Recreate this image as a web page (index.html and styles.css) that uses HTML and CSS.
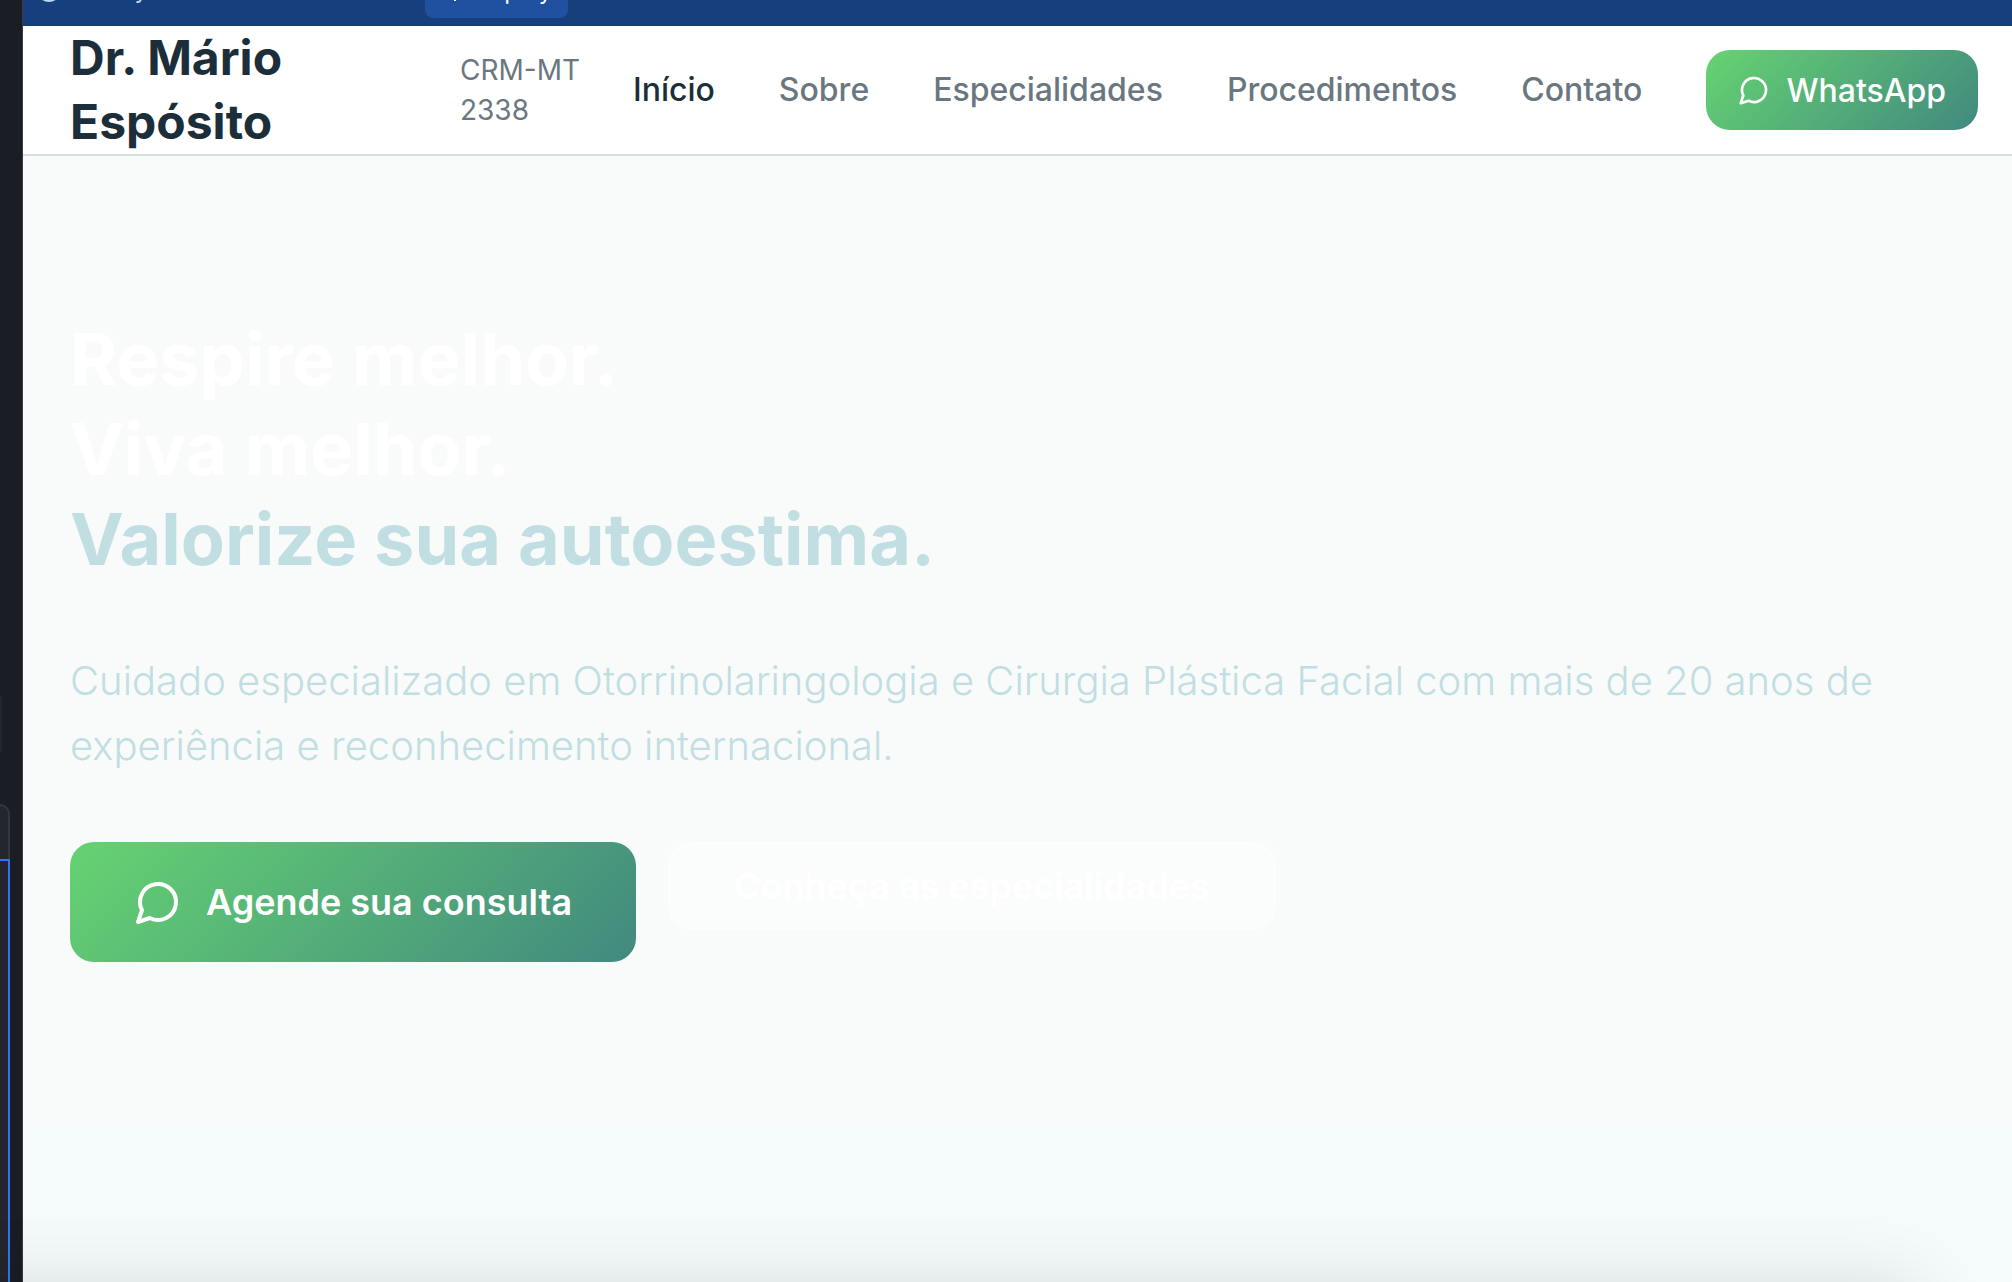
FILE: index.html
```html
<!DOCTYPE html>
<html lang="pt-BR">
<head>
<meta charset="utf-8">
<meta name="viewport" content="width=device-width, initial-scale=1">
<title>Dr. Mário Espósito</title>
<link rel="stylesheet" href="styles.css">
</head>
<body>
<div class="workspace">
  <aside class="chat-edge">
    <div class="chat-card"></div>
    <div class="composer">
      <div class="composer-head"></div>
      <div class="composer-input"></div>
    </div>
  </aside>
  <div class="preview">
    <div class="toolbar">
      <div class="toolbar-note">
        <svg class="toolbar-icon" viewBox="0 0 24 24" aria-hidden="true"><circle cx="12" cy="12" r="11"/></svg>
        <span>Ready</span>
      </div>
      <button class="deploy" type="button">
        <svg class="toolbar-icon" viewBox="0 0 24 24" aria-hidden="true"><path d="M14 3v20"/></svg>
        <span>Deploy</span>
      </button>
    </div>
    <header class="site-header">
      <div class="brand">
        <h2 class="brand-name">Dr. Mário Espósito</h2>
        <span class="brand-id">CRM-MT 2338</span>
      </div>
      <nav class="site-nav">
        <a class="nav-link nav-link-active" href="#inicio">Início</a>
        <a class="nav-link" href="#sobre">Sobre</a>
        <a class="nav-link" href="#especialidades">Especialidades</a>
        <a class="nav-link" href="#procedimentos">Procedimentos</a>
        <a class="nav-link" href="#contato">Contato</a>
        <button class="button button-small" type="button">
          <svg class="icon" viewBox="0 0 24 24" aria-hidden="true"><path d="M7.9 20A9 9 0 1 0 4 16.1L2 22Z"/></svg>
          <span>WhatsApp</span>
        </button>
      </nav>
    </header>
    <main>
      <section class="hero" id="inicio">
        <h1 class="hero-title">Respire melhor.<br>Viva melhor.<br><span class="accent">Valorize sua autoestima.</span></h1>
        <p class="hero-text">Cuidado especializado em Otorrinolaringologia e Cirurgia Plástica Facial com mais de 20 anos de experiência e reconhecimento internacional.</p>
        <div class="hero-actions">
          <button class="button button-large" type="button">
            <svg class="icon icon-large" viewBox="0 0 24 24" aria-hidden="true"><path d="M7.9 20A9 9 0 1 0 4 16.1L2 22Z"/></svg>
            <span>Agende sua consulta</span>
          </button>
          <button class="button-ghost" type="button">Conheça as especialidades</button>
        </div>
      </section>
      <section class="next-section" id="sobre"></section>
    </main>
  </div>
  <div class="panel-shadow"></div>
</div>
</body>
</html>
```
FILE: styles.css
```css
* {
  box-sizing: border-box;
}

body {
  margin: 0;
  font-family: Inter, "Liberation Sans", sans-serif;
}

button {
  border: 0;
  font-family: inherit;
  cursor: pointer;
}

.workspace {
  position: relative;
  display: grid;
  grid-template-columns: 23px minmax(0, 1fr);
  height: 100vh;
  overflow: hidden;
}

/* Right edge of the chat column */
.chat-edge {
  display: flex;
  flex-direction: column;
  background: #1a1d24;
  border-right: 1px solid #3a3c42;
}

.chat-card {
  width: 2px;
  height: 56px;
  margin-top: 696px;
  background: #23262e;
  border-radius: 0 8px 8px 0;
}

.composer {
  display: flex;
  flex: 1;
  flex-direction: column;
  width: 10px;
  margin-top: 52px;
}

.composer-head {
  height: 55px;
  background: #23262e;
  border: 2px solid #33363e;
  border-width: 2px 2px 0 0;
  border-radius: 0 14px 0 0;
}

.composer-input {
  flex: 1;
  background: #23262e;
  border: 2px solid #3574f0;
  border-width: 2px 2px 0 0;
}

.preview {
  display: flex;
  flex-direction: column;
  background: #f9fbfa;
}

/* Toolbar, scrolled mostly out of view */
.toolbar {
  display: flex;
  flex: none;
  align-items: flex-end;
  height: 26px;
  padding: 0 14px 8px;
  background: #183f7d;
  color: #b9d7fb;
  font-size: 24px;
  line-height: 32px;
}

.toolbar-note {
  display: flex;
  gap: 16px;
  align-items: center;
  width: 388px;
  height: 56px;
}

.toolbar-icon {
  width: 24px;
  height: 24px;
  fill: none;
  stroke: currentColor;
  stroke-width: 2;
  overflow: visible;
}

.deploy {
  display: flex;
  gap: 8px;
  align-items: center;
  height: 56px;
  padding: 0 16px;
  background: #2050a0;
  border-radius: 8px;
  color: #fff;
  font-size: 24px;
}

.site-header {
  display: flex;
  flex: none;
  align-items: center;
  justify-content: space-between;
  height: 130px;
  padding: 0 34px 0 47px;
  background: #fff;
  border-bottom: 2px solid #d3dfdf;
}

.brand {
  display: flex;
  gap: 24px;
  align-items: center;
}

.brand-name {
  width: 366px;
  margin: 0;
  padding-right: 120px;
  color: #1c2e3a;
  font-size: 48px;
  font-weight: 700;
  line-height: 64px;
}

.brand-id {
  width: 124px;
  color: #6a7780;
  font-size: 28px;
  line-height: 40px;
}

.site-nav {
  display: flex;
  gap: 64px;
  align-items: center;
}

.nav-link {
  color: #6a7780;
  font-size: 32px;
  font-weight: 500;
  line-height: 48px;
  text-decoration: none;
}

.nav-link-active {
  color: #1c2e3a;
}

.button {
  display: flex;
  align-items: center;
  background: linear-gradient(135deg, #66d372, #41897f);
  border-radius: 24px;
  color: #fff;
  white-space: nowrap;
}

.button-small {
  gap: 16px;
  height: 80px;
  padding: 0 32px;
  font-size: 32px;
  font-weight: 500;
}

.button-large {
  gap: 24px;
  height: 120px;
  padding: 0 64px;
  font-size: 36px;
  font-weight: 600;
}

.icon {
  width: 32px;
  height: 32px;
  fill: none;
  stroke: currentColor;
  stroke-linecap: round;
  stroke-linejoin: round;
  stroke-width: 2;
}

.icon-large {
  width: 48px;
  height: 48px;
}

.hero {
  padding: 158px 47px 160px;
}

.hero-title {
  margin: 0 0 64px;
  color: #fff;
  font-size: 72px;
  font-weight: 700;
  line-height: 90px;
}

.accent {
  color: #c1dee2;
}

.hero-text {
  margin: 0 0 64px;
  color: #c1dee2;
  font-size: 40px;
  font-weight: 300;
  line-height: 65px;
}

.hero-actions {
  display: flex;
  gap: 32px;
  align-items: flex-start;
}

.button-ghost {
  height: 88px;
  padding: 0 64px;
  background: #fbfcfc;
  border: 2px solid #fcfdfd;
  border-radius: 24px;
  color: #fff;
  font-size: 36px;
  font-weight: 600;
}

.next-section {
  height: 400px;
  background: #f5fbfb;
}

/* Shadow cast by the panel below the window */
.panel-shadow {
  position: absolute;
  top: 100%;
  right: 92px;
  left: -100px;
  height: 100px;
  border-radius: 24px;
  box-shadow: 0 0 70px rgba(0, 0, 0, 0.12);
}
```
